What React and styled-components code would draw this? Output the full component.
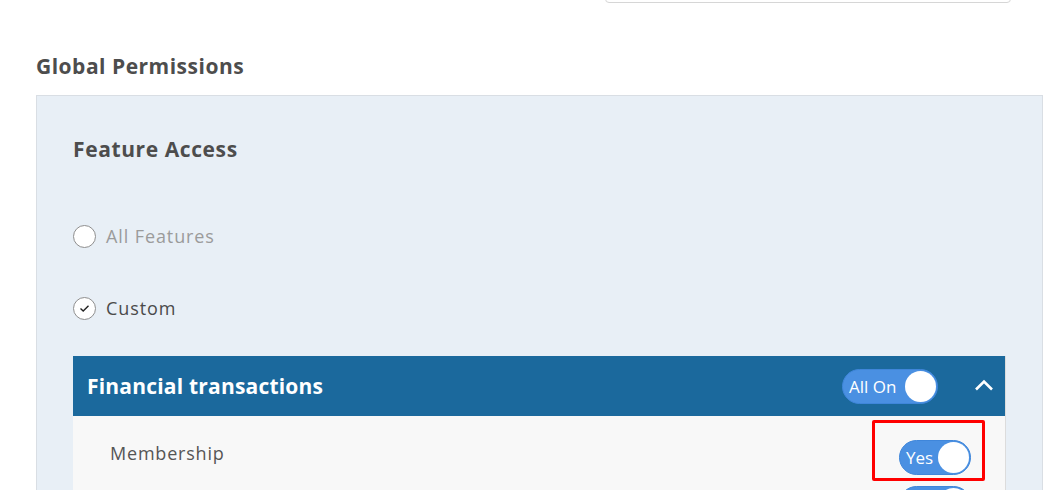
import React from 'react';
import styled, { createGlobalStyle } from 'styled-components';

const GlobalStyle = createGlobalStyle`
  body {
    margin: 0;
    background: #ffffff;
    font-family: "Open Sans", "Lato", sans-serif;
    color: #4a4a4a;
  }
`;

const Page = styled.div`
  width: 1046px;
  height: 490px;
  overflow: hidden;
`;

const TopBar = styled.div`
  height: 3px;
  display: flex;
  align-items: flex-end;
  padding-left: 605px;
  overflow: hidden;
`;

const SearchBox = styled.div`
  width: 406px;
  height: 40px;
  flex-shrink: 0;
  box-sizing: border-box;
  border: 1px solid #d6d6d6;
  border-radius: 4px;
  background: #fff;
`;

const Title = styled.h2`
  margin: 0;
  padding: 50px 0 0 36px;
  height: 42px;
  font-size: 21px;
  line-height: 26px;
  font-weight: 700;
  color: #4d4d4d;
  letter-spacing: 0.5px;
`;

const Panel = styled.section`
  margin-left: 36px;
  width: 1007px;
  box-sizing: border-box;
  border: 1px solid #d9dee4;
  background: #e8eff6;
  padding: 40px 36px 0 36px;
`;

const SectionTitle = styled.h3`
  margin: 0;
  font-size: 21px;
  line-height: 26px;
  font-weight: 700;
  color: #4d4d4d;
  letter-spacing: 0.6px;
`;

const Options = styled.div`
  display: flex;
  flex-direction: column;
  gap: 48px;
  padding: 62px 0 36px;
`;

const Option = styled.label`
  display: flex;
  align-items: center;
  gap: 10px;
  height: 24px;
  font-size: 18px;
  letter-spacing: 0.9px;
  color: ${({ disabled }) => (disabled ? '#9b9b9b' : '#4a4a4a')};
`;

const Radio = styled.span`
  width: 23px;
  height: 23px;
  box-sizing: border-box;
  border-radius: 50%;
  border: 1px solid #8e8e8e;
  background: #fff;
  display: flex;
  align-items: center;
  justify-content: center;
`;

const Accordion = styled.div`
  border-right: 1px solid #dcdcdc;
`;

const AccordionHeader = styled.div`
  height: 60px;
  background: #1b699d;
  display: flex;
  align-items: center;
  padding: 0 11px 0 14px;
  gap: 36px;
`;

const HeaderTitle = styled.span`
  flex: 1;
  font-size: 21px;
  font-weight: 700;
  color: #ffffff;
  letter-spacing: 0.2px;
`;

const Toggle = styled.span`
  position: relative;
  display: flex;
  align-items: center;
  justify-content: space-between;
  width: ${({ width }) => width}px;
  height: 35px;
  box-sizing: border-box;
  border-radius: 18px;
  background: #4a90e2;
  border: 1px solid #3f86da;
  padding: 0 1px 0 6px;
  font-size: 17px;
  color: #ffffff;

  &::before {
    content: '';
    order: 2;
    width: 31px;
    height: 31px;
    border-radius: 50%;
    background: #ffffff;
  }

  ${({ marked }) =>
    marked &&
    `
    &::after {
      content: '';
      position: absolute;
      left: -28px;
      right: -15px;
      top: -21px;
      bottom: -7px;
      border: 3px solid #ff0000;
      border-radius: 2px;
    }
  `}
`;

const Chevron = styled.svg`
  width: 20px;
  height: 12px;
  margin-top: -2px;
`;

const Row = styled.div`
  display: flex;
  align-items: flex-start;
  justify-content: space-between;
  background: #f8f8f8;
  padding: 5px 34px 6px 37px;

  &:first-of-type {
    padding-top: 24px;
  }
`;

const RowLabel = styled.span`
  font-size: 18px;
  line-height: 24px;
  margin-top: 1px;
  letter-spacing: 0.8px;
  color: #555555;
`;

const permissions = [
  { label: 'Membership', marked: true },
  { label: 'Payments', marked: false },
];

export default function App() {
  return (
    <Page>
      <GlobalStyle />
      <TopBar>
        <SearchBox />
      </TopBar>
      <Title>Global Permissions</Title>
      <Panel>
        <SectionTitle>Feature Access</SectionTitle>
        <Options>
          <Option disabled>
            <Radio />
            All Features
          </Option>
          <Option>
            <Radio>
              <svg width="11" height="9" viewBox="0 0 11 9">
                <path d="M1.5 4.5 L4.2 7 L9.5 1.8" fill="none" stroke="#222" strokeWidth="1.4" />
              </svg>
            </Radio>
            Custom
          </Option>
        </Options>
        <Accordion>
          <AccordionHeader>
            <HeaderTitle>Financial transactions</HeaderTitle>
            <Toggle width={96}>All On</Toggle>
            <Chevron viewBox="0 0 20 12">
              <path d="M2 10.5 L10 2.5 L18 10.5" fill="none" stroke="#fff" strokeWidth="2.6" />
            </Chevron>
          </AccordionHeader>
          <div>
            {permissions.map((p) => (
              <Row key={p.label}>
                <RowLabel>{p.label}</RowLabel>
                <Toggle width={72} marked={p.marked}>Yes</Toggle>
              </Row>
            ))}
          </div>
        </Accordion>
      </Panel>
    </Page>
  );
}
